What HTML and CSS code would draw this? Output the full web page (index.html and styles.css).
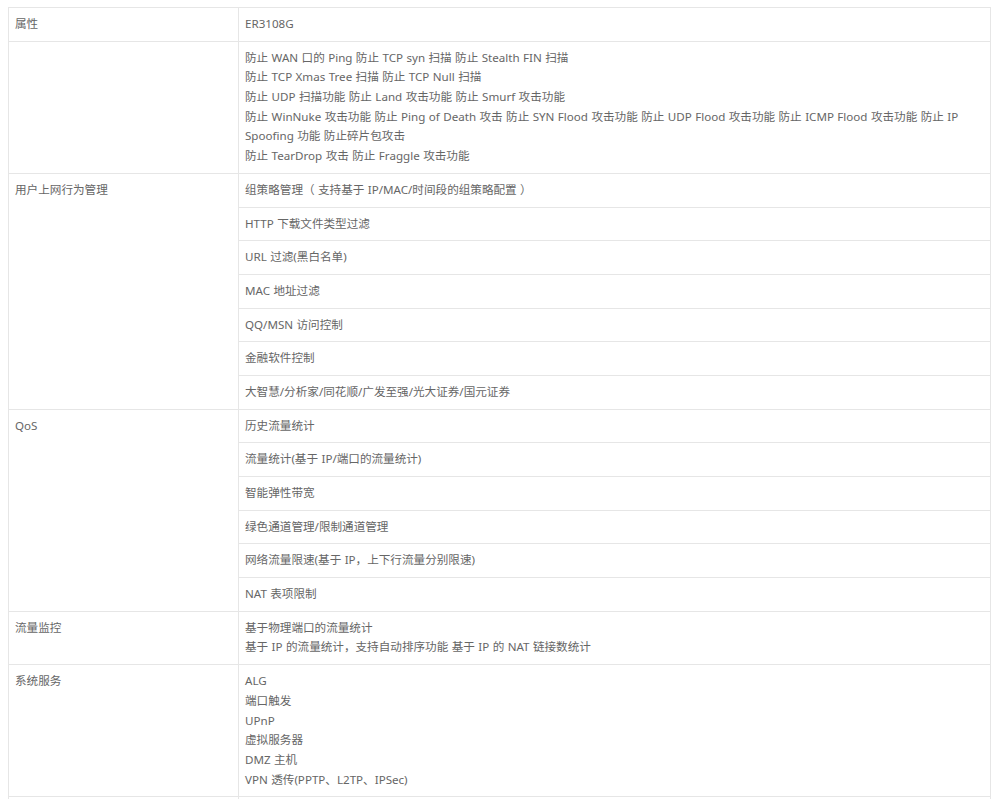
FILE: index.html
```html
<!DOCTYPE html>
<html lang="zh-CN">
<head>
<meta charset="utf-8">
<title>ER3108G 参数</title>
<link rel="stylesheet" href="styles.css">
</head>
<body>
<table class="spec">
  <colgroup><col class="c-name"><col class="c-val"></colgroup>
  <tbody>
    <tr><td>属性</td><td>ER3108G</td></tr>
    <tr><td></td><td>防止 WAN 口的 Ping 防止 TCP syn 扫描 防止 Stealth FIN 扫描<br>防止 TCP Xmas Tree 扫描 防止 TCP Null 扫描<br>防止 UDP 扫描功能 防止 Land 攻击功能 防止 Smurf 攻击功能<br>防止 WinNuke 攻击功能 防止 Ping of Death 攻击 防止 SYN Flood 攻击功能 防止 UDP Flood 攻击功能 防止 ICMP Flood 攻击功能 防止 IP<br>Spoofing 功能 防止碎片包攻击<br>防止 TearDrop 攻击 防止 Fraggle 攻击功能</td></tr>
    <tr><td rowspan="7">用户上网行为管理</td><td>组策略管理（ 支持基于 IP/MAC/时间段的组策略配置 ）</td></tr>
    <tr><td>HTTP 下载文件类型过滤</td></tr>
    <tr><td>URL 过滤(黑白名单)</td></tr>
    <tr><td>MAC 地址过滤</td></tr>
    <tr><td>QQ/MSN 访问控制</td></tr>
    <tr><td>金融软件控制</td></tr>
    <tr><td>大智慧/分析家/同花顺/广发至强/光大证券/国元证券</td></tr>
    <tr><td rowspan="6">QoS</td><td>历史流量统计</td></tr>
    <tr><td>流量统计(基于 IP/端口的流量统计)</td></tr>
    <tr><td>智能弹性带宽</td></tr>
    <tr><td>绿色通道管理/限制通道管理</td></tr>
    <tr><td>网络流量限速(基于 IP，上下行流量分别限速)</td></tr>
    <tr><td>NAT 表项限制</td></tr>
    <tr><td>流量监控</td><td>基于物理端口的流量统计<br>基于 IP 的流量统计，支持自动排序功能 基于 IP 的 NAT 链接数统计</td></tr>
    <tr><td>系统服务</td><td>ALG<br>端口触发<br>UPnP<br>虚拟服务器<br>DMZ 主机<br>VPN 透传(PPTP、L2TP、IPSec)</td></tr>
    <tr class="more"><td></td><td></td></tr>
  </tbody>
</table>
</body>
</html>
```
FILE: styles.css
```css
html, body {
  margin: 0;
  padding: 0;
  background: #ffffff;
}
body {
  padding: 7px 0 0 8px;
  font-family: "Noto Sans", "Noto Sans CJK SC", sans-serif;
  font-size: 11.6px;
  word-spacing: 0.4px;
  color: #666666;
}
.spec {
  border-collapse: collapse;
  width: 983px;
  table-layout: fixed;
}
.c-name { width: 230px; }
.spec td {
  border: 1px solid #e6e6e6;
  padding: 6px 6px 7px;
  line-height: 19.68px;
  vertical-align: top;
  text-align: left;
}
.spec .more td {
  height: 20px;
}
```
